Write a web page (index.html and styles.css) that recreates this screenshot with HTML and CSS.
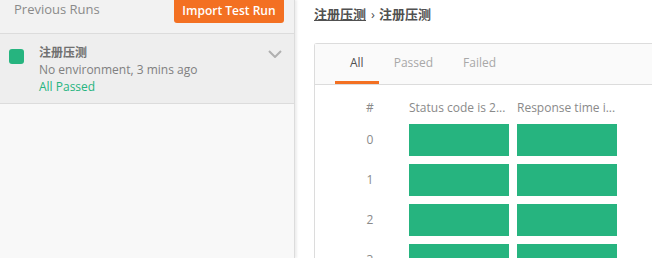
FILE: index.html
```html
<!DOCTYPE html>
<html>
<head>
<meta charset="utf-8">
<link rel="stylesheet" href="styles.css">
</head>
<body>
<div class="app">
  <aside class="sidebar">
    <div class="side-head">
      <span class="side-title">Previous Runs</span>
      <button class="import-btn">Import Test Run</button>
    </div>
    <div class="run-item">
      <span class="run-status"></span>
      <div class="run-info">
        <div class="run-name">注册压测</div>
        <div class="run-meta">No environment, 3 mins ago</div>
        <div class="run-result">All Passed</div>
      </div>
      <svg class="chevron" width="14" height="8" viewBox="0 0 14 8"><path d="M1 1 L7 7 L13 1" fill="none" stroke="#b0b0b0" stroke-width="2"/></svg>
    </div>
  </aside>
  <main class="content">
    <div class="crumbs"><span class="crumb-link">注册压测</span><span class="crumb-sep">›</span><span class="crumb-cur">注册压测</span></div>
    <section class="card">
      <nav class="tabs">
        <span class="tab active">All</span>
        <span class="tab">Passed</span>
        <span class="tab">Failed</span>
      </nav>
      <div class="grid">
        <div class="hcell num">#</div>
        <div class="hcell">Status code is 2...</div>
        <div class="hcell">Response time i...</div>
        <div class="num">0</div><div class="pass"></div><div class="pass"></div>
        <div class="num">1</div><div class="pass"></div><div class="pass"></div>
        <div class="num">2</div><div class="pass"></div><div class="pass"></div>
        <div class="num">3</div><div class="pass"></div><div class="pass"></div>
      </div>
    </section>
  </main>
</div>
</body>
</html>
```
FILE: styles.css
```css
html, body {
  margin: 0;
  padding: 0;
  height: 100%;
  overflow: hidden;
  background: #ffffff;
  font-family: "Open Sans", "Noto Sans CJK SC", sans-serif;
}
.app {
  display: flex;
  height: 258px;
}
.sidebar {
  width: 294px;
  flex: none;
  background: #f8f8f8;
  border-right: 1px solid #dcdcdc;
  box-shadow: 2px 0 2px rgba(0,0,0,0.07);
  display: flex;
  flex-direction: column;
}
.side-head {
  height: 33px;
  box-sizing: border-box;
  display: flex;
  justify-content: space-between;
  align-items: flex-start;
  padding: 0 10px 0 14px;
  background: #f2f2f2;
  border-bottom: 1px solid #dcdcdc;
  height: 34px;
}
.side-title {
  font-size: 13px;
  line-height: 18px;
  color: #8a8a8a;
}
.import-btn {
  margin-top: -5px;
  height: 28px;
  width: 110px;
  border: none;
  border-radius: 3px;
  background: #f37022;
  color: #ffffff;
  font-family: "Open Sans", sans-serif;
  font-size: 12px;
  font-weight: 600;
  padding: 4px 0 0 0;
  line-height: 18px;
}
.run-item {
  display: flex;
  align-items: flex-start;
  padding: 10px 12px 8px 9px;
  background: #eeeeee;
  border-bottom: 1px solid #dcdcdc;
}
.run-status {
  width: 15px;
  height: 15px;
  border-radius: 3px;
  background: #26b47f;
  margin-top: 5px;
  flex: none;
}
.run-info {
  margin-left: 15px;
  font-size: 12px;
  line-height: 17px;
  flex: 1;
}
.run-name {
  font-weight: bold;
  color: #707070;
}
.run-meta {
  color: #808080;
}
.run-result {
  color: #26b47f;
}
.chevron {
  margin-top: 6px;
  flex: none;
}
.content {
  flex: 1;
  padding: 5px 0 0 16px;
  margin-left: 3px;
  min-width: 0;
}
.crumbs {
  font-size: 13px;
  line-height: 18px;
  font-weight: bold;
  color: #505050;
  white-space: nowrap;
}
.crumb-link {
  text-decoration: underline;
}
.crumb-sep {
  margin: 0 4px 0 5px;
  font-weight: normal;
}
.card {
  margin-top: 20px;
  width: 400px;
  border: 1px solid #dcdcdc;
  border-right: none;
  border-radius: 3px 0 0 0;
  background: #ffffff;
  height: 260px;
}
.tabs {
  display: flex;
  padding-left: 20px;
  background: #fafafa;
  border-bottom: 1px solid #dcdcdc;
  height: 40px;
}
.tab {
  padding: 0 15px;
  font-size: 12px;
  line-height: 37px;
  color: #a8a8a8;
  border-bottom: 3px solid transparent;
}
.tab.active {
  color: #505050;
  border-bottom-color: #f37022;
}
.grid {
  display: grid;
  grid-template-columns: 62px 100px 100px;
  grid-auto-rows: 32px;
  grid-template-rows: 17px;
  gap: 8px;
  padding: 14px 0 0 24px;
  font-size: 12px;
}
.hcell {
  line-height: 17px;
  color: #8a8a8a;
  white-space: nowrap;
  overflow: hidden;
}
.num {
  text-align: center;
  color: #8a8a8a;
  line-height: 32px;
}
.hcell.num {
  line-height: 17px;
}
.pass {
  background: #26b47f;
}
```
